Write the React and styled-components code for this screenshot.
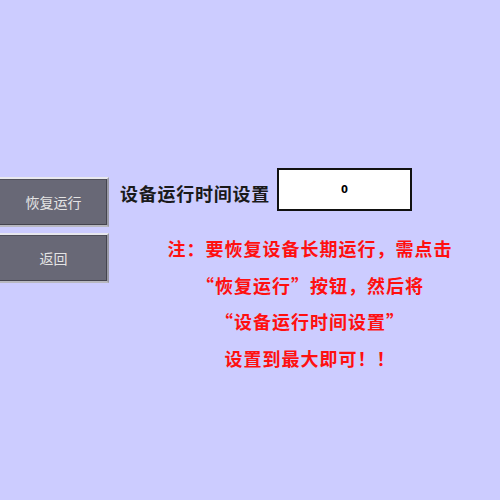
import React from "react";
import styled, { createGlobalStyle } from "styled-components";

const Global = createGlobalStyle`
  html, body { margin: 0; padding: 0; background: #ccccff; }
  body { font-family: "Noto Sans CJK SC", "Noto Sans", sans-serif; }
`;

const Page = styled.div`
  width: 500px;
  height: 500px;
  display: flex;
  align-items: flex-start;
  padding-top: 168px;
  box-sizing: border-box;
`;

const ButtonColumn = styled.div`
  margin-top: 9px;
  display: flex;
  flex-direction: column;
  gap: 6px;
  width: 109px;
`;

const PanelButton = styled.button`
  height: 50px;
  width: 109px;
  box-sizing: border-box;
  background: #686876;
  color: #e4e4e4;
  font-family: "Noto Sans CJK SC", sans-serif;
  font-size: 14px;
  border: none;
  border-top: 2px solid #e8e8ee;
  border-right: 2px solid #9a9aa6;
  border-bottom: 2px solid #b8b8c0;
  box-shadow: inset -1px -1px 0 #44444f, inset 0 1px 0 #50505c;
  padding: 0;
  cursor: pointer;
`;

const Right = styled.div`
  margin-left: 11px;
  display: flex;
  flex-direction: column;
`;

const SettingRow = styled.div`
  display: flex;
  align-items: center;
  gap: 7px;
`;

const Label = styled.span`
  font-family: "Noto Sans CJK SC", sans-serif;
  font-weight: 700;
  font-size: 18px;
  letter-spacing: 0.75px;
  color: #1a1a1a;
  margin-top: 7px;
`;

const ValueBox = styled.div`
  width: 135px;
  height: 43px;
  box-sizing: border-box;
  background: #ffffff;
  border: 2px solid #111;
  display: flex;
  align-items: center;
  justify-content: center;
  font-family: "DejaVu Sans", sans-serif;
  font-weight: 700;
  font-size: 10px;
  color: #000;
`;

const Note = styled.div`
  margin-top: 19px;
  margin-left: 40px;
  width: 300px;
  text-align: center;
  color: #ff1010;
  font-family: "Noto Sans CJK SC", sans-serif;
  font-weight: 700;
  font-size: 18px;
  letter-spacing: 1px;
  line-height: 36.5px;
`;

const NoteLine = styled.div`
  white-space: nowrap;
`;

export default function App() {
  return (
    <>
      <Global />
      <Page>
        <ButtonColumn>
          <PanelButton>恢复运行</PanelButton>
          <PanelButton>返回</PanelButton>
        </ButtonColumn>
        <Right>
          <SettingRow>
            <Label>设备运行时间设置</Label>
            <ValueBox>0</ValueBox>
          </SettingRow>
          <Note>
            <NoteLine>注：要恢复设备长期运行，需点击</NoteLine>
            <NoteLine>“恢复运行”按钮，然后将</NoteLine>
            <NoteLine>“设备运行时间设置”</NoteLine>
            <NoteLine>设置到最大即可！！</NoteLine>
          </Note>
        </Right>
      </Page>
    </>
  );
}
